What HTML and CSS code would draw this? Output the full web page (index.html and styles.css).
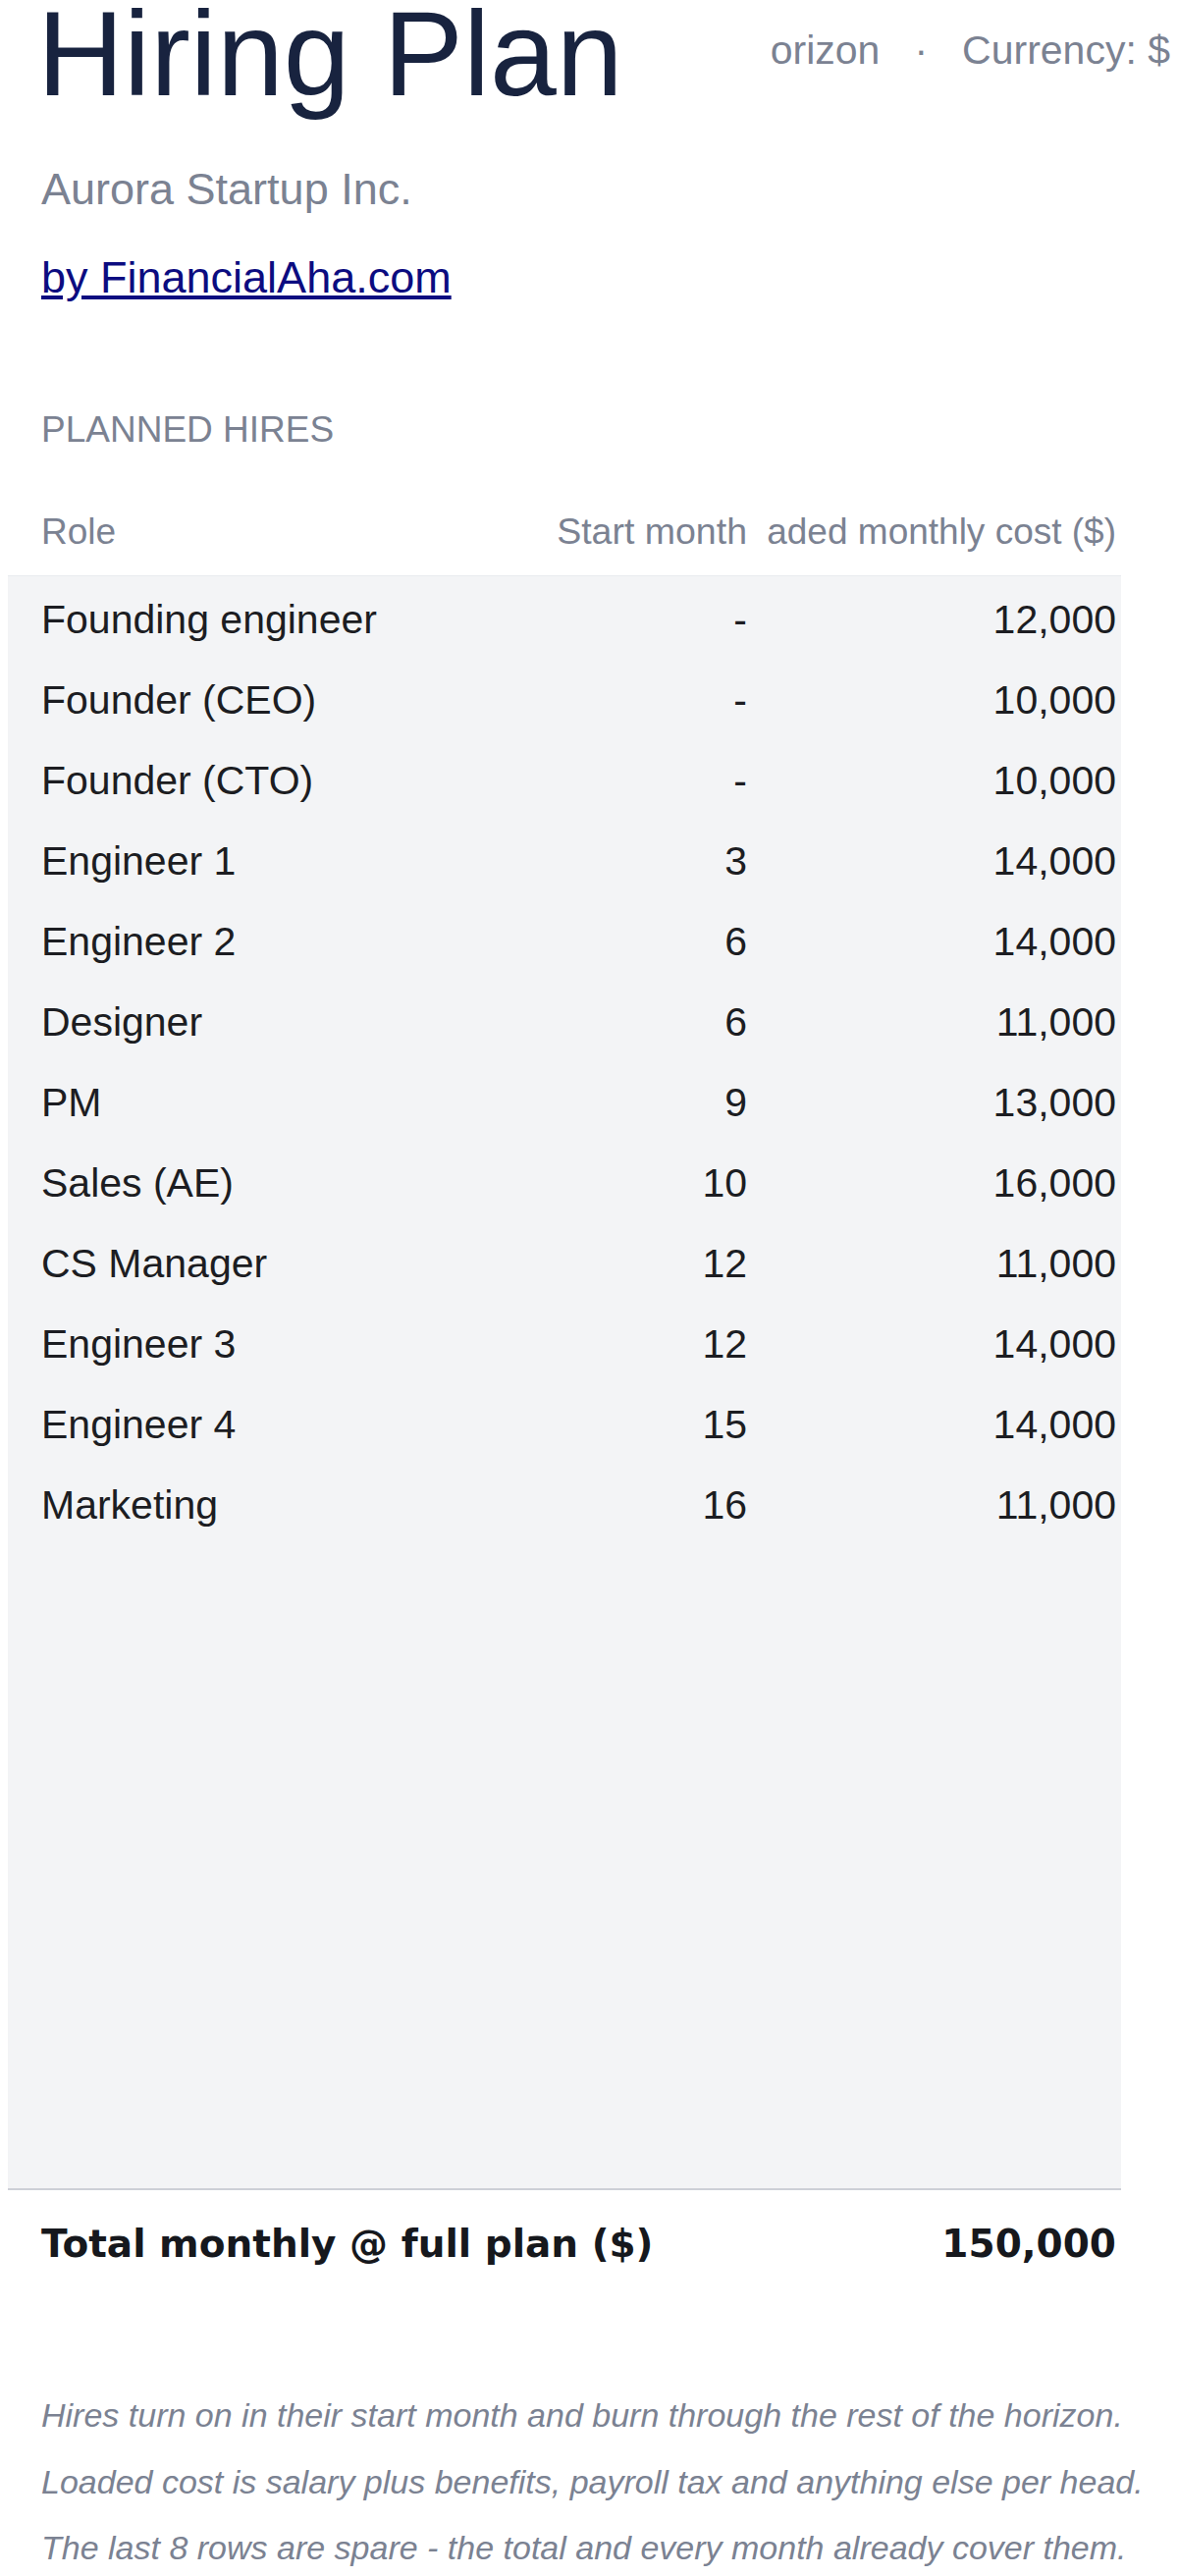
FILE: index.html
```html
<!DOCTYPE html>
<html>

<head>
  <meta charset="utf-8" />
  <meta name="viewport" content="width=device-width, initial-scale=1" />
  <title>Hiring Plan</title>
  <link rel="stylesheet" href="styles.css">
</head>

<body>
  <header class="top">
    <h1 class="title">Hiring Plan</h1>
    <div class="meta">
      <span>24-month horizon</span>
      <span class="sep">·</span>
      <span>Currency: $</span>
    </div>
  </header>

  <p class="company">Aurora Startup Inc.</p>
  <p class="byline"><a href="#">by FinancialAha.com</a></p>

  <section class="hires">
    <h2 class="label">Planned hires</h2>

    <div class="sheet">
      <div class="row head">
        <div class="cell role">Role</div>
        <div class="cell start">Start month</div>
        <div class="cell cost"><span>Loaded monthly cost ($)</span></div>
      </div>

      <div class="body">
        <div class="row"><div class="cell role">Founding engineer</div><div class="cell start">-</div><div class="cell cost">12,000</div></div>
        <div class="row"><div class="cell role">Founder (CEO)</div><div class="cell start">-</div><div class="cell cost">10,000</div></div>
        <div class="row"><div class="cell role">Founder (CTO)</div><div class="cell start">-</div><div class="cell cost">10,000</div></div>
        <div class="row"><div class="cell role">Engineer 1</div><div class="cell start">3</div><div class="cell cost">14,000</div></div>
        <div class="row"><div class="cell role">Engineer 2</div><div class="cell start">6</div><div class="cell cost">14,000</div></div>
        <div class="row"><div class="cell role">Designer</div><div class="cell start">6</div><div class="cell cost">11,000</div></div>
        <div class="row"><div class="cell role">PM</div><div class="cell start">9</div><div class="cell cost">13,000</div></div>
        <div class="row"><div class="cell role">Sales (AE)</div><div class="cell start">10</div><div class="cell cost">16,000</div></div>
        <div class="row"><div class="cell role">CS Manager</div><div class="cell start">12</div><div class="cell cost">11,000</div></div>
        <div class="row"><div class="cell role">Engineer 3</div><div class="cell start">12</div><div class="cell cost">14,000</div></div>
        <div class="row"><div class="cell role">Engineer 4</div><div class="cell start">15</div><div class="cell cost">14,000</div></div>
        <div class="row"><div class="cell role">Marketing</div><div class="cell start">16</div><div class="cell cost">11,000</div></div>
        <!-- spare rows -->
        <div class="row"><div class="cell role"></div><div class="cell start"></div><div class="cell cost"></div></div>
        <div class="row"><div class="cell role"></div><div class="cell start"></div><div class="cell cost"></div></div>
        <div class="row"><div class="cell role"></div><div class="cell start"></div><div class="cell cost"></div></div>
        <div class="row"><div class="cell role"></div><div class="cell start"></div><div class="cell cost"></div></div>
        <div class="row"><div class="cell role"></div><div class="cell start"></div><div class="cell cost"></div></div>
        <div class="row"><div class="cell role"></div><div class="cell start"></div><div class="cell cost"></div></div>
        <div class="row"><div class="cell role"></div><div class="cell start"></div><div class="cell cost"></div></div>
        <div class="row"><div class="cell role"></div><div class="cell start"></div><div class="cell cost"></div></div>
      </div>

      <div class="row total">
        <div class="cell role">Total monthly @ full plan ($)</div>
        <div class="cell start"></div>
        <div class="cell cost">150,000</div>
      </div>
    </div>
  </section>

  <div class="notes">
    <p>Hires turn on in their start month and burn through the rest of the horizon.</p>
    <p>Loaded cost is salary plus benefits, payroll tax and anything else per head.</p>
    <p>The last 8 rows are spare - the total and every month already cover them.</p>
  </div>
</body>

</html>
```

FILE: styles.css
```css
html,
body {
  background-color: #ffffff;
  color: #1c1d22;
}

body {
  margin: 0 8px 8px;
  font-family: "Liberation Sans", Arial, sans-serif;
}

/* header */

.top {
  display: flex;
  justify-content: space-between;
  align-items: flex-start;
}

.title {
  margin: 0 0 0 30px;
  font-size: 122px;
  line-height: 110px;
  font-weight: normal;
  color: #18233f;
}

.meta {
  display: flex;
  justify-content: flex-end;
  gap: 35px;
  width: 406px;
  margin-top: 28px;
  overflow: hidden;
  white-space: nowrap;
  font-size: 41px;
  line-height: 46px;
  color: #7b8292;
}

.meta span {
  flex-shrink: 0;
}

.company,
.byline {
  margin: 0;
  padding-left: 34px;
  font-size: 45px;
  line-height: 52px;
}

.company {
  margin-top: 57px;
  color: #7b8292;
}

.byline {
  margin-top: 38px;
}

.byline a {
  color: #0c0c80;
}

/* planned hires */

.label {
  margin: 107px 0 0;
  padding-left: 34px;
  font-size: 37px;
  line-height: 43px;
  font-weight: normal;
  text-transform: uppercase;
  color: #7b8292;
}

.sheet {
  width: 1134px;
}

.row {
  display: grid;
  grid-template-columns: 553px 220px 361px;
  box-sizing: border-box;
}

.cell {
  white-space: nowrap;
}

.cell.role {
  padding-left: 34px;
}

.cell.start {
  padding-right: 20px;
  text-align: right;
}

.cell.cost {
  padding-right: 5px;
  text-align: right;
}

.row.head {
  padding: 61px 0 23px;
  font-size: 37px;
  line-height: 43px;
  color: #7b8292;
}

.row.head .start {
  font-size: 37.5px;
}

.row.head .cost {
  display: flex;
  justify-content: flex-end;
  overflow: hidden;
}

.row.head .cost span {
  flex-shrink: 0;
}

.body {
  background-color: #f3f4f6;
  border-top: 1px solid #e9ebef;
  border-bottom: 2px solid #cdd0d7;
  padding-bottom: 2px;
}

.body .row {
  min-height: 82px;
  padding: 21px 0 14px;
  font-size: 41px;
  line-height: 47px;
}

.row.total {
  padding-top: 32px;
  font-family: "DejaVu Sans", sans-serif;
  font-weight: bold;
  font-size: 39px;
  line-height: 46px;
  color: #16181d;
}

/* notes */

.notes {
  margin-top: 118px;
  padding-left: 34px;
}

.notes p {
  margin: 0;
  font-size: 34px;
  line-height: 67.5px;
  font-style: italic;
  color: #7b8292;
  white-space: nowrap;
}
```
